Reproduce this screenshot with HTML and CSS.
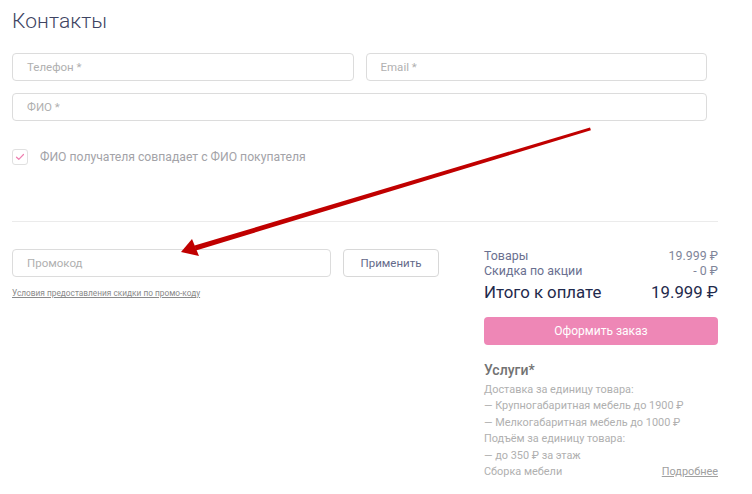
FILE: index.html
```html
<!DOCTYPE html>
<html lang="ru">
<head>
<meta charset="utf-8">
<link rel="stylesheet" href="styles.css">
</head>
<body>
<div class="page">
  <h1 class="title">Контакты</h1>
  <div class="form">
    <div class="row">
      <div class="field">Телефон *</div>
      <div class="field">Email *</div>
    </div>
    <div class="row">
      <div class="field">ФИО *</div>
    </div>
  </div>
  <label class="check">
    <span class="box"><svg width="10" height="8" viewBox="0 0 10 8"><path d="M1.5 4.2 L3.8 6.3 L8.5 1.5" fill="none" stroke="#ee7fb0" stroke-width="1.2" stroke-linecap="round" stroke-linejoin="round"/></svg></span>
    <span class="check-label">ФИО получателя совпадает с ФИО покупателя</span>
  </label>
  <div class="divider"></div>
  <div class="bottom">
    <div class="promo">
      <div class="promo-row">
        <div class="field promo-field">Промокод</div>
        <div class="btn-apply">Применить</div>
      </div>
      <a class="terms">Условия предоставления скидки по промо-коду</a>
    </div>
    <div class="summary">
      <div class="line"><span>Товары</span><span>19.999 ₽</span></div>
      <div class="line"><span>Скидка по акции</span><span>- 0 ₽</span></div>
      <div class="line total"><span>Итого к оплате</span><span>19.999 ₽</span></div>
      <div class="btn-order">Оформить заказ</div>
      <div class="services">
        <div class="services-title">Услуги*</div>
        <div class="svc">Доставка за единицу товара:</div>
        <div class="svc">— Крупногабаритная мебель до 1900 ₽</div>
        <div class="svc">— Мелкогабаритная мебель до 1000 ₽</div>
        <div class="svc">Подъём за единицу товара:</div>
        <div class="svc">— до 350 ₽ за этаж</div>
        <div class="svc svc-last"><span>Сборка мебели</span><a class="more">Подробнее</a></div>
      </div>
    </div>
  </div>
  <svg class="arrow" width="752" height="494" viewBox="0 0 752 494">
    <polygon points="590,127.5 590.9,130.3 196,250.5 194.5,245.5" fill="#c00000"/>
    <polygon points="181,252 192,239 199,256" fill="#c00000"/>
  </svg>
</div>
</body>
</html>
```

FILE: styles.css
```css
* { box-sizing: border-box; }
html, body { margin: 0; padding: 0; background: #fff; }
body { font-family: Roboto, "Noto Sans", Arial, sans-serif; }
.page { position: relative; width: 752px; height: 494px; padding: 6px 34px 0 12px; overflow: hidden; }
.title { margin: 0; font-size: 21px; font-weight: 300; line-height: 30px; color: #3e4462; letter-spacing: 0.1px; }
.form { width: 695px; margin-top: 17px; display: flex; flex-direction: column; gap: 12px; }
.row { display: flex; gap: 12px; }
.field { flex: 1; height: 28px; border: 1px solid #dcdcdc; border-radius: 4px; padding-left: 14px; font-size: 11.5px; line-height: 26px; color: #b0b0b0; font-weight: 400; }
.check { display: flex; align-items: center; margin-top: 28px; height: 16px; }
.box { width: 16px; height: 16px; border: 1px solid #e0e0e0; border-radius: 3px; display: flex; align-items: center; justify-content: center; }
.check-label { margin-left: 12px; font-size: 12.2px; color: #a3a3a8; }
.divider { margin-top: 56px; height: 1px; background: #ebebeb; width: 706px; }
.bottom { display: flex; margin-top: 27px; width: 706px; justify-content: space-between; }
.promo { width: 427px; }
.promo-row { display: flex; gap: 12px; }
.promo-field { flex: none; width: 319px; }
.btn-apply { width: 96px; height: 28px; border: 1px solid #d8d8d8; border-radius: 4px; text-align: center; font-size: 11.5px; line-height: 26px; color: #646a8a; font-weight: 400; }
.terms { display: block; margin-top: 11px; font-size: 8.3px; color: #8a8a8a; text-decoration: underline; }
.summary { width: 234px; margin-top: -1px; }
.line { display: flex; justify-content: space-between; font-size: 12.4px; line-height: 15px; color: #6a7090; font-weight: 400; }
.line span:last-child { color: #80859a; }
.total { font-size: 16.8px; line-height: 22px; margin-top: 3px; color: #1f2a4c; font-weight: 400; }
.total span:last-child { color: #1f2a4c; }
.btn-order { margin-top: 14px; height: 28px; border-radius: 4px; background: #ee87b6; color: #fff; font-size: 12px; font-weight: 400; text-align: center; line-height: 28px; }
.services { margin-top: 15px; }
.services-title { font-size: 14px; font-weight: 500; color: #727272; line-height: 20px; margin-bottom: 2px; }
.svc { font-size: 10.9px; line-height: 16.4px; color: #b0b0b0; font-weight: 400; }
.svc-last { display: flex; justify-content: space-between; }
.more { text-decoration: underline; color: #a0a0a0; }
.arrow { position: absolute; left: 0; top: 0; pointer-events: none; }
```
